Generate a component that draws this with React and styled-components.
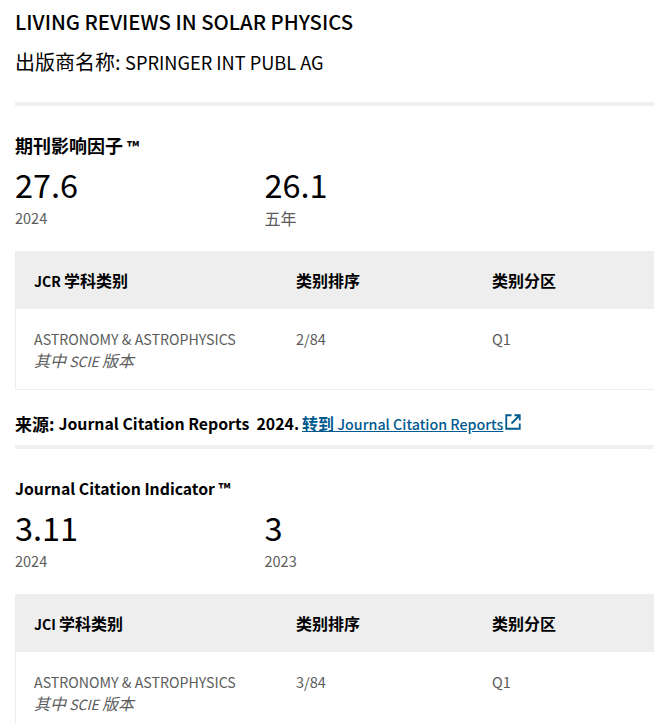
import React from "react";
import styled, { createGlobalStyle } from "styled-components";

const Global = createGlobalStyle`
  html, body { margin: 0; padding: 0; background: #fff; overflow: hidden; }
  body { font-family: "Noto Sans CJK SC", "Noto Sans", sans-serif; color: #000; }
`;
const Page = styled.div`
  width: 654px; height: 724px; overflow: hidden; padding: 8px 0 0 15px; box-sizing: border-box;
`;
const Lat = styled.span`
  font-size: ${p => p.$size}px;
`;
const Title = styled.h1`
  margin: 0; font-size: 20.3px; line-height: 27px; font-weight: 500; color: #000;
`;
const Publisher = styled.div`
  margin-top: 13px; font-size: 20px; line-height: 28px; color: #000;
`;
const Divider = styled.div`
  height: 4px; background: #f0f0f0; margin-top: ${p => p.$top}px;
`;
const SectionTitle = styled.h2`
  margin: ${p => p.$top}px 0 0; font-size: ${p => p.$size}px; line-height: 24px; font-weight: 700;
`;
const Metrics = styled.div`
  display: grid; grid-template-columns: 249.5px 1fr; margin-top: 4px;
`;
const Value = styled.div`
  font-size: 32.5px; line-height: 44px; color: #000;
`;
const Caption = styled.div`
  font-size: ${p => p.$size || 14.5}px; line-height: 22px; margin-top: 1px; color: #5c5c5c;
`;
const Table = styled.div`
  margin-top: ${p => p.$top}px; border-left: 1px solid #eee; border-bottom: 1px solid #eee; height: ${p => p.$height}px;
`;
const Row = styled.div`
  display: grid; grid-template-columns: 262px 196px 1fr; padding-left: 18px;
`;
const HeadRow = styled(Row)`
  height: 58px; background: #eeeeee; align-items: center; margin-left: -1px; padding-left: 19px;
  font-size: 16px; font-weight: 700;
`;
const BodyRow = styled(Row)`
  padding-top: 19px; font-size: 14.5px; line-height: 22px; color: #5c5c5c;
`;
const Category = styled.div`
  font-size: 14.2px;
`;
const Edition = styled.div`
  font-style: italic; font-size: 16px; margin-top: -1px;
`;
const Source = styled.div`
  display: flex; align-items: center; margin-top: 21px; height: 24px; font-size: 17px; font-weight: 700; white-space: pre;
`;
const SourceLink = styled.a`
  display: inline-flex; align-items: center; color: #00598f; text-decoration: underline; font-size: 14.25px; font-weight: 500;
  margin-left: 3px;
`;
const LinkCn = styled.span`font-size: 16px; font-weight: 700;`;

const Ext = () => (
  <svg width="18" height="18" viewBox="0 0 24 24" fill="none" stroke="#00598f" strokeWidth="2.4" style={{ marginLeft: 1, marginTop: -3 }}>
    <path d="M10 3H3v18h18v-7M14 3h7v7M21 3 10 14" />
  </svg>
);

function Block({ code, rank, top, height }) {
  return (
    <Table $top={top} $height={height}>
      <HeadRow>
        <div><Lat $size={14}>{code} </Lat>学科类别</div>
        <div>类别排序</div>
        <div>类别分区</div>
      </HeadRow>
      <BodyRow>
        <Category>ASTRONOMY &amp; ASTROPHYSICS<Edition>其中<Lat $size={14}> SCIE </Lat>版本</Edition></Category>
        <div>{rank}</div>
        <div>Q1</div>
      </BodyRow>
    </Table>
  );
}

export default function App() {
  return (
    <Page>
      <Global />
      <Title>LIVING REVIEWS IN SOLAR PHYSICS</Title>
      <Publisher>出版商名称: <Lat $size={18.2}>SPRINGER INT PUBL AG</Lat></Publisher>
      <Divider $top={26} />
      <SectionTitle $top={27} $size={18}>期刊影响因子 <Lat $size={16}>™</Lat></SectionTitle>
      <Metrics>
        <div><Value>27.6</Value><Caption>2024</Caption></div>
        <div><Value>26.1</Value><Caption $size={16}>五年</Caption></div>
      </Metrics>
      <Block code="JCR" rank="2/84" top={22} height={138} />
      <Source>来源: <Lat $size={15.85}>Journal Citation Reports  2024.</Lat> <SourceLink><LinkCn>转到</LinkCn> Journal Citation Reports<Ext /></SourceLink></Source>
      <Divider $top={10} />
      <SectionTitle $top={28} $size={15.8}>Journal Citation Indicator ™</SectionTitle>
      <Metrics>
        <div><Value>3.11</Value><Caption>2024</Caption></div>
        <div><Value>3</Value><Caption>2023</Caption></div>
      </Metrics>
      <Block code="JCI" rank="3/84" top={22} height={138} />
    </Page>
  );
}
